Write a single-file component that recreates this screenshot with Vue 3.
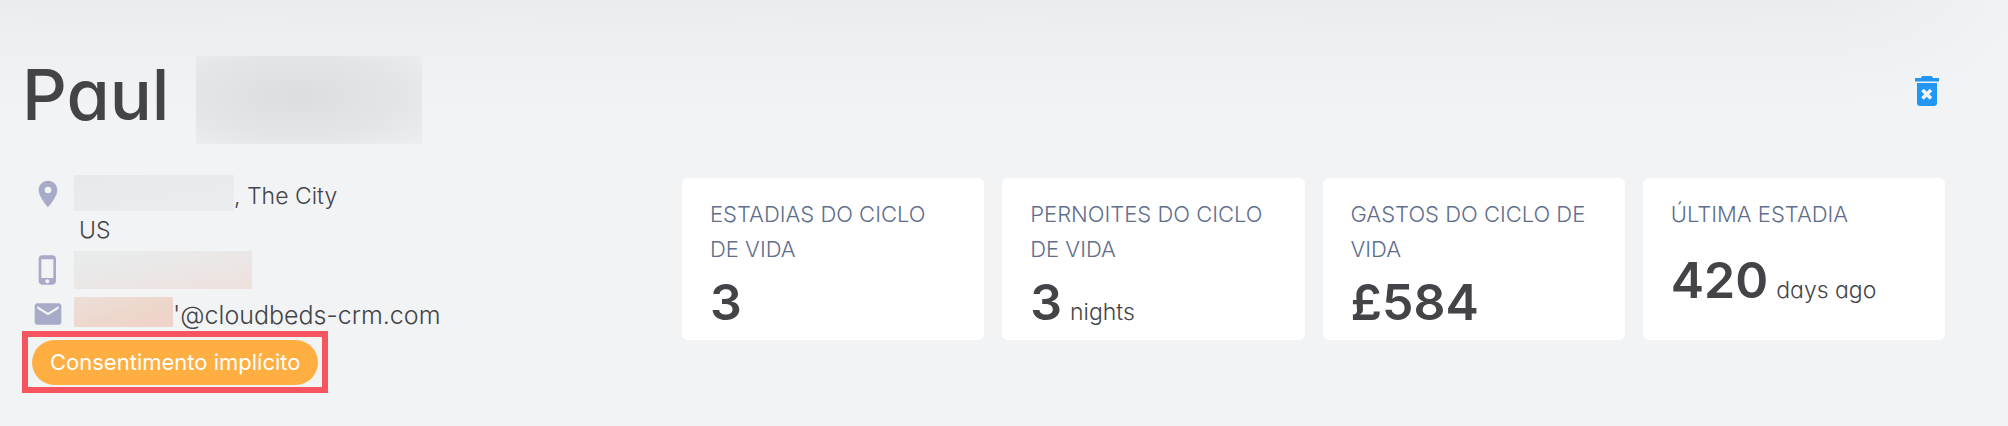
<script setup>
const stats = [
  { label: 'ESTADIAS DO CICLO DE VIDA', value: '3', unit: '' },
  { label: 'PERNOITES DO CICLO DE VIDA', value: '3', unit: 'nights' },
  { label: 'GASTOS DO CICLO DE VIDA', value: '£584', unit: '' },
  { label: 'ÚLTIMA ESTADIA', value: '420', unit: 'days ago' },
]
</script>

<template>
  <main class="profile">
    <header class="head">
      <h1 class="name">Paul</h1>
      <span class="mask mask-name"></span>
      <button class="delete" type="button" aria-label="Delete">
        <svg viewBox="0 0 24 30" width="24" height="30">
          <path fill="#2196f3" d="M0 2h6l1-2h10l1 2h6v3.500H0z M2 7h20v20q0 3-3 3H5q-3 0-3-3z" />
          <path d="M7.500 14l8.500 8.500M16 14l-8.500 8.500" stroke="#f1f3f5" stroke-width="3.600" />
        </svg>
      </button>
    </header>

    <div class="body">
      <section class="contact">
        <div class="row row-address">
          <svg class="icon" viewBox="0 0 24 24">
            <path d="M12 2C8.130 2 5 5.130 5 9c0 5.250 7 13 7 13s7-7.750 7-13c0-3.870-3.130-7-7-7zm0 9.500a2.500 2.500 0 0 1 0-5 2.500 2.500 0 0 1 0 5z" />
          </svg>
          <address class="address">
            <span class="line"><span class="mask mask-street"></span>, The City</span>
            <span class="country">US</span>
          </address>
        </div>
        <div class="row row-phone">
          <svg class="icon" viewBox="0 0 24 24">
            <path d="M15.500 1h-8C6.120 1 5 2.120 5 3.500v17C5 21.880 6.120 23 7.500 23h8c1.380 0 2.500-1.120 2.500-2.500v-17C18 2.120 16.880 1 15.500 1zm-4 21c-.830 0-1.500-.670-1.500-1.500s.670-1.500 1.500-1.500 1.500.670 1.500 1.500-.670 1.500-1.500 1.500zm4.500-4H7V4h9v14z" />
          </svg>
          <span class="mask mask-phone"></span>
        </div>
        <div class="row row-mail">
          <svg class="icon" viewBox="0 0 24 24">
            <path d="M20 4H4c-1.100 0-1.990.900-1.990 2L2 18c0 1.100.900 2 2 2h16c1.100 0 2-.900 2-2V6c0-1.100-.900-2-2-2zm0 4l-8 5-8-5V6l8 5 8-5v2z" />
          </svg>
          <span class="mask mask-mail"></span>
          <span class="mail">'@cloudbeds-crm.com</span>
        </div>
        <div class="highlight"><span class="pill">Consentimento implícito</span></div>
      </section>

      <section class="stats">
        <article v-for="s in stats" :key="s.label" class="card">
          <h2 class="label">{{ s.label }}</h2>
          <p class="figure"><strong class="value">{{ s.value }}</strong><span v-if="s.unit" class="unit">{{ s.unit }}</span></p>
        </article>
      </section>
    </div>
  </main>
</template>

<style>
body {
  background: #f1f3f5;
}
</style>

<style scoped>
.profile {
  position: relative;
  overflow: hidden;
  box-sizing: border-box;
  min-height: 100vh;
  padding: 56px 63px 32px 22px;
  font-family: Inter, "Open Sans", sans-serif;
  font-feature-settings: "cv11";
  font-size: 23px;
  font-weight: 300;
  line-height: 35px;
  color: #444448;
}
.profile::before {
  content: "";
  position: absolute;
  top: -100px;
  left: -200px;
  right: 60px;
  height: 100px;
  border-radius: 40px;
  box-shadow: 0 0 130px rgba(50, 50, 60, 0.08);
}
h1, h2, p {
  margin: 0;
}
.head {
  position: relative;
  display: flex;
  height: 88px;
}
.name {
  width: 174px;
  font-size: 70px;
  font-weight: 500;
  line-height: 78px;
}
.mask {
  flex: none;
}
.mask-name {
  width: 226px;
  background: radial-gradient(ellipse at 45% 45%, #dcdddf 0%, #e4e5e7 60%, #edeeef 100%);
}
.delete {
  margin: 20px 6px 0 auto;
  height: 30px;
  padding: 0;
  border: 0;
  background: none;
  cursor: pointer;
}
.delete svg {
  display: block;
}
.body {
  display: flex;
  align-items: flex-start;
  padding-top: 31px;
}
.contact {
  width: 660px;
  flex: none;
}
.row {
  display: flex;
  padding-left: 10px;
}
.icon {
  flex: none;
  width: 32px;
  height: 32px;
  margin-right: 10px;
  fill: #a7abc7;
}
.row-address {
  height: 76px;
}
.row-address .icon {
  margin-top: 3px;
}
.address {
  font-style: normal;
}
.line {
  display: flex;
  height: 38px;
  line-height: 42px;
}
.mask-street {
  width: 160px;
  height: 36px;
  background: linear-gradient(170deg, #e8e9eb, #ebecee);
}
.country {
  display: block;
  padding-left: 5px;
}
.row-phone {
  align-items: center;
  height: 38px;
}
.mask-phone {
  width: 178px;
  height: 38px;
  background: linear-gradient(170deg, #e9eaea 20%, #ebe6e5 60%, #eee0dd);
}
.row-mail {
  align-items: center;
  margin-top: 8px;
  height: 34px;
}
.row-mail .mask {
  align-self: flex-start;
}
.mask-mail {
  width: 99px;
  height: 30px;
  background: linear-gradient(160deg, #eddfda, #edd6ca 60%, #f1d2c8);
}
.mail {
  padding-top: 3px;
  font-size: 25px;
}
.highlight {
  display: inline-block;
  vertical-align: top;
  padding: 3px 4px 2px;
  border: 6px solid #f6555f;
}
.pill {
  display: block;
  padding: 0 18px;
  border-radius: 23px;
  background: #ffae42;
  color: #fff;
  font-size: 22px;
  font-weight: 400;
  line-height: 45px;
}
.stats {
  flex: 1;
  display: grid;
  grid-template-columns: repeat(4, 1fr);
  gap: 18px;
  margin-top: 3px;
}
.card {
  display: flex;
  flex-direction: column;
  box-sizing: border-box;
  height: 162px;
  padding: 19px 26px 0 28px;
  border-radius: 6px;
  background: #fff;
}
.label {
  font-size: 22px;
  font-weight: 300;
  line-height: 35px;
  color: #5f6e8c;
}
.figure {
  margin-top: 3px;
  line-height: 64px;
}
.card:last-child .figure {
  margin-top: 16px;
}
.value {
  font-size: 50px;
  font-weight: 600;
}
.unit {
  margin-left: 8px;
}
</style>
